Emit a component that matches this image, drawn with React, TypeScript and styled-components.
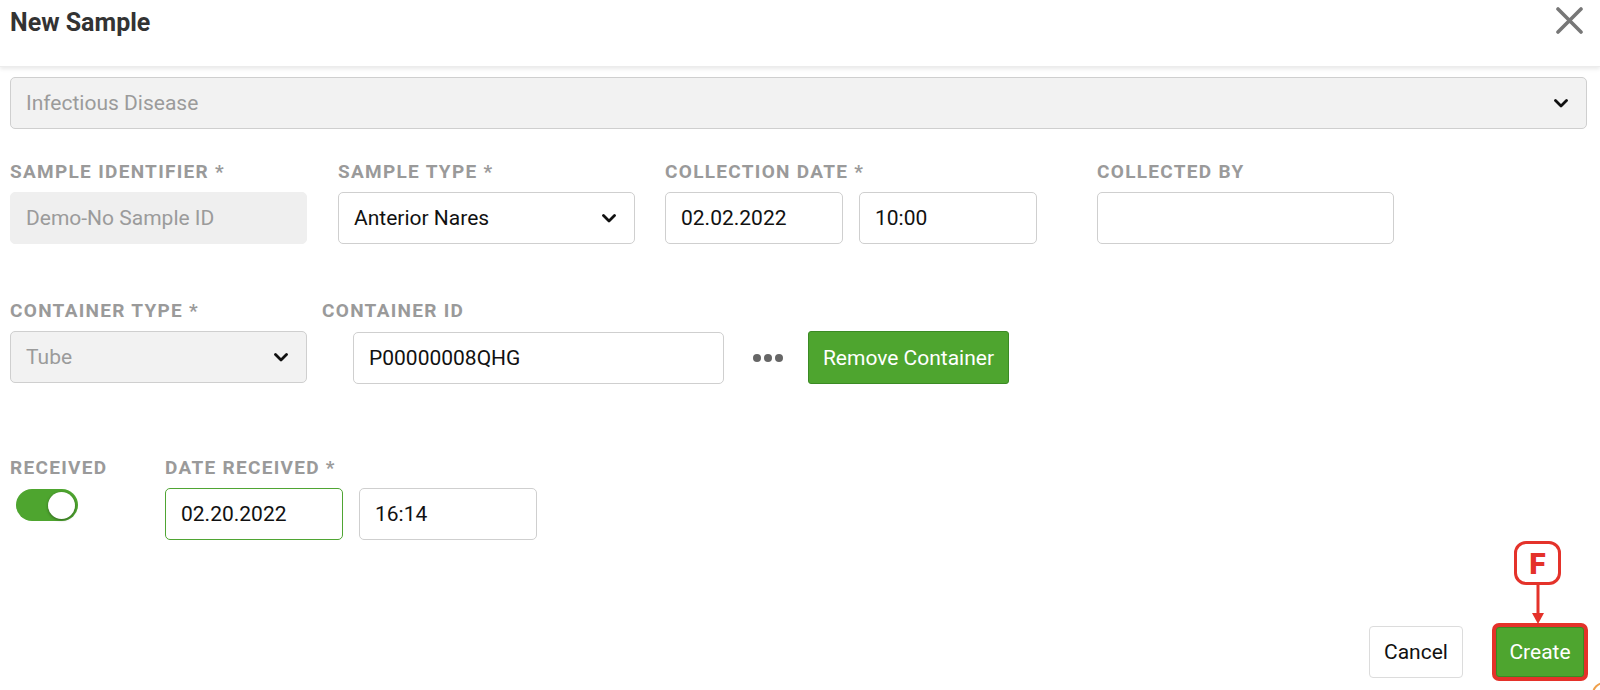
import React from "react";
import styled, { createGlobalStyle } from "styled-components";

const Global = createGlobalStyle`
  html, body { margin: 0; padding: 0; background: #fff; }
  body { font-family: Roboto, "Liberation Sans", Arial, sans-serif; color: #222; }
  * { box-sizing: border-box; }
`;

const Page = styled.div`
  width: 1600px;
  height: 690px;
  overflow: hidden;
  position: relative;
  display: flex;
  flex-direction: column;
`;

const Header = styled.header`
  height: 67px;
  flex: none;
  display: flex;
  align-items: flex-start;
  justify-content: space-between;
  padding: 7px 17px 0 10px;
  box-shadow: 0 2px 4px rgba(0, 0, 0, 0.09);
  border-bottom: 1px solid #ececec;
  position: relative;
  z-index: 1;
`;

const Title = styled.h1`
  margin: 0;
  font-size: 25px;
  font-weight: 700;
  line-height: 31px;
  color: #333;
`;

const CloseBtn = styled.button`
  border: 0;
  background: none;
  padding: 0;
  width: 27px;
  height: 27px;
  cursor: pointer;
  display: flex;
`;

const Body = styled.main`
  flex: 1;
  display: flex;
  flex-direction: column;
  padding: 10px 13px 0 10px;
`;

const Control = styled.div<{ $w?: number; $disabled?: boolean; $focus?: boolean }>`
  width: ${(p) => (p.$w ? `${p.$w}px` : "100%")};
  height: 52px;
  flex: none;
  display: flex;
  align-items: center;
  justify-content: space-between;
  padding: 0 18px 0 15px;
  font-size: 21px;
  border-radius: 5px;
  border: 1px solid ${(p) => (p.$focus ? "#4fa533" : "#cfcfcf")};
  background: ${(p) => (p.$disabled ? "#f2f2f2" : "#fff")};
  color: ${(p) => (p.$disabled ? "#9b9b9b" : "#111")};
`;

const ReadOnly = styled(Control)`
  border-color: #efefef;
  background: #efefef;
`;

const Row = styled.div<{ $mt: number }>`
  display: flex;
  align-items: flex-start;
  margin-top: ${(p) => p.$mt}px;
`;

const Field = styled.div<{ $w?: number; $mr?: number }>`
  display: flex;
  flex-direction: column;
  gap: 9px;
  width: ${(p) => (p.$w ? `${p.$w}px` : "auto")};
  margin-right: ${(p) => p.$mr ?? 0}px;
`;

const Label = styled.label`
  font-size: 19px;
  line-height: 22px;
  font-weight: 700;
  letter-spacing: 1.3px;
  color: #9a9a9a;
  text-transform: uppercase;
  white-space: nowrap;
`;

const Pair = styled.div`
  display: flex;
  gap: 16px;
`;

const Indent = styled.div`
  display: flex;
  align-items: center;
  padding-left: 31px;
`;

const Dots = styled.div`
  display: flex;
  gap: 3px;
  margin: 0 25px 0 29px;
  span {
    width: 8px;
    height: 8px;
    border-radius: 50%;
    background: #666;
  }
`;

const GreenButton = styled.button`
  height: 53px;
  width: 201px;
  padding: 0;
  border-radius: 3px;
  border: 1px solid #3b8a24;
  background: #4ea52f;
  color: #fff;
  font-family: inherit;
  font-size: 21px;
  cursor: pointer;
`;

const Toggle = styled.div`
  width: 62px;
  height: 32px;
  margin: 1px 0 0 6px;
  border-radius: 16px;
  background: #4ea52f;
  display: flex;
  align-items: center;
  justify-content: flex-end;
  padding-right: 3px;
  span {
    width: 27px;
    height: 27px;
    border-radius: 50%;
    background: #fff;
    box-shadow: 0 1px 3px rgba(0, 0, 0, 0.4);
  }
`;

const Footer = styled.footer`
  margin-top: auto;
  display: flex;
  justify-content: flex-end;
  align-items: center;
  gap: 29px;
  padding: 0 12px 9px 0;
`;

const CancelButton = styled.button`
  width: 94px;
  height: 52px;
  border: 1px solid #dcdcdc;
  border-radius: 4px;
  background: #fff;
  font-family: inherit;
  font-size: 21px;
  color: #111;
  cursor: pointer;
`;

const Highlight = styled.div`
  position: relative;
  border: 4px solid #e4322a;
  border-radius: 7px;
  background: #e4322a;
`;

const CreateButton = styled.button`
  display: block;
  width: 88px;
  height: 50px;
  border: 1px solid #3b8a24;
  border-radius: 3px;
  background: #4ea52f;
  color: #fff;
  font-family: inherit;
  font-size: 21px;
  cursor: pointer;
`;

const Callout = styled.div`
  position: absolute;
  left: 18px;
  top: -86px;
  display: flex;
  flex-direction: column;
  align-items: center;
`;

const CalloutBox = styled.div`
  width: 47px;
  height: 44px;
  border: 3px solid #e4322a;
  border-radius: 12px;
  background: #fff;
  color: #e4322a;
  font-weight: 900;
  font-size: 30px;
  display: flex;
  align-items: center;
  justify-content: center;
`;

const Corner = styled.div`
  position: absolute;
  right: -16px;
  bottom: -16px;
  width: 24px;
  height: 24px;
  border-radius: 50%;
  border: 2px solid #f0a04b;
`;

const Chevron = () => (
  <svg width="14" height="9" viewBox="0 0 14 9">
    <polyline points="1.5,1.5 7,7 12.5,1.5" fill="none" stroke="#111" strokeWidth="2.8" strokeLinecap="round" strokeLinejoin="round" />
  </svg>
);

export default function App() {
  return (
    <>
      <Global />
      <Page>
        <Header>
          <Title>New Sample</Title>
          <CloseBtn aria-label="Close">
            <svg width="27" height="27" viewBox="0 0 27 27">
              <path d="M2 2 L25 25 M25 2 L2 25" stroke="#777" strokeWidth="3.6" strokeLinecap="round" />
            </svg>
          </CloseBtn>
        </Header>
        <Body>
          <Control $disabled>
            <span>Infectious Disease</span>
            <Chevron />
          </Control>

          <Row $mt={32}>
            <Field $w={297} $mr={31}>
              <Label>Sample Identifier *</Label>
              <ReadOnly $disabled>Demo-No Sample ID</ReadOnly>
            </Field>
            <Field $w={297} $mr={30}>
              <Label>Sample Type *</Label>
              <Control>
                <span>Anterior Nares</span>
                <Chevron />
              </Control>
            </Field>
            <Field $mr={60}>
              <Label>Collection Date *</Label>
              <Pair>
                <Control $w={178}>02.02.2022</Control>
                <Control $w={178}>10:00</Control>
              </Pair>
            </Field>
            <Field $w={297}>
              <Label>Collected By</Label>
              <Control />
            </Field>
          </Row>

          <Row $mt={56}>
            <Field $w={297} $mr={15}>
              <Label>Container Type *</Label>
              <Control $disabled>
                <span>Tube</span>
                <Chevron />
              </Control>
            </Field>
            <Field>
              <Label>Container ID</Label>
              <Indent>
                <Control $w={371}>P00000008QHG</Control>
                <Dots>
                  <span />
                  <span />
                  <span />
                </Dots>
                <GreenButton>Remove Container</GreenButton>
              </Indent>
            </Field>
          </Row>

          <Row $mt={73}>
            <Field $w={155}>
              <Label>Received</Label>
              <Toggle>
                <span />
              </Toggle>
            </Field>
            <Field>
              <Label>Date Received *</Label>
              <Pair>
                <Control $w={178} $focus>02.20.2022</Control>
                <Control $w={178}>16:14</Control>
              </Pair>
            </Field>
          </Row>
        </Body>
        <Footer>
          <CancelButton>Cancel</CancelButton>
          <Highlight>
            <Callout>
              <CalloutBox>F</CalloutBox>
              <svg width="14" height="39" viewBox="0 0 14 39">
                <line x1="7" y1="0" x2="7" y2="29" stroke="#e4322a" strokeWidth="3" />
                <polygon points="1,28 13,28 7,39" fill="#e4322a" />
              </svg>
            </Callout>
            <CreateButton>Create</CreateButton>
          </Highlight>
        </Footer>
        <Corner />
      </Page>
    </>
  );
}
